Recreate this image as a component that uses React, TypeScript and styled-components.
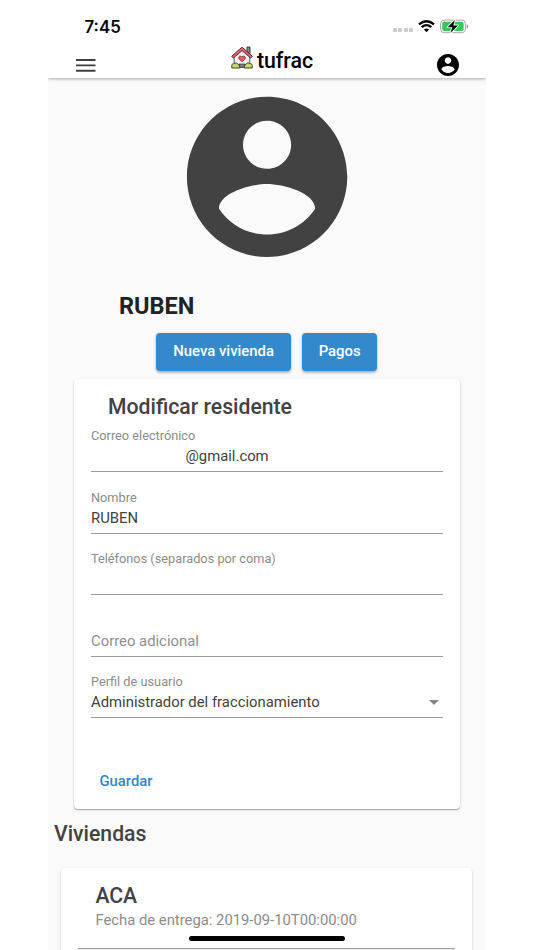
import React from "react";
import styled, { createGlobalStyle } from "styled-components";

const GlobalStyle = createGlobalStyle`
  * { box-sizing: border-box; }
  html, body { margin: 0; padding: 0; background: #fff; overflow: hidden; }
  body { font-family: Roboto, "Liberation Sans", sans-serif; }
`;

const Phone = styled.div`
  position: relative;
  width: 438px;
  height: 950px;
  margin-left: 48px;
  overflow: hidden;
  background: #fafafa;
  display: flex;
  flex-direction: column;
`;

const Header = styled.header`
  flex: none;
  height: 78px;
  background: #fff;
  box-shadow: 0 1px 3px rgba(0, 0, 0, 0.32);
  clip-path: inset(0 0 -6px 0);
`;

const StatusBar = styled.div`
  display: flex;
  align-items: center;
  justify-content: space-between;
  height: 44px;
  padding: 9px 17px 0 36.5px;
`;

const Clock = styled.span`
  font: 600 16.8px/20px Inter, sans-serif;
  color: #000;
`;

const StatusIcons = styled.div`
  display: flex;
  align-items: center;
  gap: 5px;
`;

const Signal = styled.div`
  display: flex;
  gap: 1.4px;
  margin-top: 7px;
`;

const Dot = styled.i`
  width: 4px;
  height: 4px;
  border-radius: 1.2px;
  background: #cbcbcb;
`;

const Toolbar = styled.div`
  display: grid;
  grid-template-columns: 1fr auto 1fr;
  height: 34px;
  padding: 0 27px 0 28px;

  & > svg { display: block; }
`;

const MenuIcon = styled.svg`
  width: 20px;
  height: 13px;
  margin-top: 15px;
`;

const UserIcon = styled.svg`
  width: 22px;
  height: 22px;
  margin-top: 10px;
  justify-self: end;
`;

const Brand = styled.div`
  display: flex;
  align-items: flex-start;
  gap: 4px;
  padding: 2px 0 0 9px;
`;

const BrandName = styled.span`
  font-size: 21.3px;
  font-weight: 500;
  line-height: 24px;
  margin-top: 3px;
  color: #000;
`;

const Avatar = styled.svg`
  display: block;
  flex: none;
  width: 162px;
  height: 162px;
  margin: 18px 0 0 138px;
`;

const UserName = styled.h1`
  margin: 33px 0 0 71px;
  font-size: 23.5px;
  line-height: 30px;
  font-weight: 700;
  color: #222;
`;

const Actions = styled.div`
  display: flex;
  gap: 11px;
  margin: 12px 0 0 108.4px;
  flex: none;
`;

const RaisedButton = styled.button<{ $width: number }>`
  width: ${(p) => p.$width}px;
  height: 38px;
  padding: 0 0 2px;
  border: 0;
  border-radius: 4px;
  background: #3389cb;
  color: #fff;
  font: 500 14.9px/34px Roboto, sans-serif;
  box-shadow: 0 2px 2px rgba(0, 0, 0, 0.2), 0 1px 4px rgba(0, 0, 0, 0.14);
`;

const Card = styled.section<{ $left: number; $width: number; $height: number; $top: number }>`
  flex: none;
  width: ${(p) => p.$width}px;
  height: ${(p) => p.$height}px;
  margin: ${(p) => p.$top}px 0 0 ${(p) => p.$left}px;
  padding: 14.5px 17px 0;
  background: #fff;
  border-radius: 4px;
  box-shadow: 0 1px 1px rgba(0, 0, 0, 0.28), 0 1px 3px rgba(0, 0, 0, 0.12);
`;

const Heading = styled.h2<{ $indent?: number }>`
  margin: 0 0 0 ${(p) => p.$indent ?? 0}px;
  font-size: 21.2px;
  line-height: 28px;
  font-weight: 500;
  color: #424242;
`;

const Field = styled.div<{ $first?: boolean }>`
  display: flex;
  flex-direction: column;
  justify-content: flex-end;
  height: ${(p) => (p.$first ? 51.3 : 61.5)}px;
  border-bottom: 1px solid #9b9b9b;
`;

const Label = styled.label`
  font-size: 12.75px;
  line-height: 16px;
  color: #8c8c8c;
  margin-bottom: 2px;
`;

const Value = styled.div<{ $indent?: number }>`
  display: flex;
  justify-content: space-between;
  align-items: center;
  height: 20px;
  margin-bottom: 5px;
  padding: 0 4.5px 0 ${(p) => p.$indent ?? 0}px;
  font-size: 14.85px;
  line-height: 20px;
  color: #424242;
`;

const Placeholder = styled(Value)`
  color: #8f8f8f;
`;

const Caret = styled.i`
  border: 5.5px solid transparent;
  border-top-color: #858585;
  border-bottom: 0;
`;

const TextButton = styled.button`
  margin: 53px 0 0 8.5px;
  padding: 0;
  border: 0;
  background: none;
  color: #2f86ca;
  font: 500 14.8px/20px Roboto, sans-serif;
`;

const SectionTitle = styled(Heading)`
  margin-top: 11px;
  margin-left: 6px;
`;

const Subtitle = styled.p`
  margin: 0 0 0 17px;
  font-size: 14.82px;
  line-height: 20px;
  color: #8c8c8c;
`;

const Panel = styled.div`
  height: 20px;
  margin-top: 18px;
  border-top: 1px solid #9b9b9b;
  background: #eee;
`;

const HomeIndicator = styled.div`
  position: absolute;
  left: 141px;
  bottom: 9px;
  width: 156px;
  height: 5px;
  border-radius: 3px;
  background: #000;
`;

const accountPath =
  "M12 2C6.48 2 2 6.48 2 12s4.48 10 10 10 10-4.48 10-10S17.52 2 12 2zm0 3c1.66 0 3 1.34 3 3s-1.34 3-3 3-3-1.34-3-3 1.34-3 3-3zm0 14.2c-2.5 0-4.71-1.28-6-3.22.03-1.99 4-3.08 6-3.08 1.99 0 5.97 1.09 6 3.08-1.29 1.94-3.5 3.22-6 3.22z";

const Wifi = () => (
  <svg width="17" height="13" viewBox="0 0 17 13" fill="none" stroke="#000">
    <path d="M1 4.3Q8.5-1.9 16 4.3" strokeWidth="2.3" />
    <path d="M3.7 7.2Q8.5 3.1 13.3 7.2" strokeWidth="2.3" />
    <path d="M5.9 9.6Q8.5 7.3 11.1 9.6L8.5 12.3Z" fill="#000" stroke="none" />
  </svg>
);

const Battery = () => (
  <svg width="29" height="15" viewBox="0 0 29 15">
    <rect x="0.6" y="1.1" width="24.8" height="12.6" rx="3.6" fill="#fff" stroke="#a5a5a5" strokeWidth="1" />
    <rect x="2.2" y="2.7" width="21.4" height="9.4" rx="2" fill="#35c759" />
    <path d="M26.7 5.4v4q1.5-.6 1.5-2t-1.5-2z" fill="#909090" />
    <path
      d="M14.8 1 7.7 8.2h4.6L10.4 14l7.6-7.5h-4.7z"
      fill="#000"
      stroke="#fff"
      strokeWidth="1.8"
      paintOrder="stroke"
      strokeLinejoin="round"
    />
  </svg>
);

const HouseLogo = () => (
  <svg width="22" height="23" viewBox="0 0 22 23" strokeLinejoin="round">
    <path d="M16 1h3v7l-3-2.5z" fill="#80858e" stroke="#33333b" strokeWidth=".9" />
    <path d="M3.2 10 11 3.5l7.8 6.5v11H3.2z" fill="#f2f0f5" stroke="#44444c" strokeWidth=".9" />
    <path d="M.7 10.2 11 1.2l10.3 9-1.6 1.9L11 4.6l-8.7 7.5z" fill="#ee6264" stroke="#542c35" strokeWidth="1" />
    <path d="M8 18h6v3.5H8z" fill="#777983" stroke="#383840" strokeWidth=".7" />
    <path d="M11 15.8 7.9 12.7c-1.2-2.1 1.7-3.6 3.1-1.6 1.4-2 4.3-.5 3.1 1.6z" fill="#f35b64" stroke="#53252d" strokeWidth=".8" />
    <path d="M.8 22v-2.8c.2-1.5 1.8-1.9 2.4-1.3 1.2-1.7 3.9-.9 4 .9 1.3 0 1.6 1.6 1.5 3.2z" fill="#c9dc63" stroke="#3b402a" strokeWidth="1" />
    <path d="M21.2 22v-2.8c-.2-1.5-1.8-1.9-2.4-1.3-1.2-1.7-3.9-.9-4 .9-1.3 0-1.6 1.6-1.5 3.2z" fill="#c9dc63" stroke="#3b402a" strokeWidth="1" />
  </svg>
);

export default function App() {
  return (
    <>
      <GlobalStyle />
      <Phone>
        <Header>
          <StatusBar>
            <Clock>7:45</Clock>
            <StatusIcons>
              <Signal><Dot /><Dot /><Dot /><Dot /></Signal>
              <Wifi />
              <Battery />
            </StatusIcons>
          </StatusBar>
          <Toolbar>
            <MenuIcon viewBox="0 0 20 13" fill="#414141">
              <path d="M0 0h19.5v1.9H0zM0 5.4h19.5v1.9H0zM0 10.8h19.5v1.9H0z" />
            </MenuIcon>
            <Brand>
              <HouseLogo />
              <BrandName>tufrac</BrandName>
            </Brand>
            <UserIcon viewBox="2 2 20 20"><path d={accountPath} /></UserIcon>
          </Toolbar>
        </Header>
        <Avatar viewBox="1.89 1.92 20.2 20.2" fill="#424242"><path d={accountPath} /></Avatar>
        <UserName>RUBEN</UserName>
        <Actions>
          <RaisedButton $width={134.5}>Nueva vivienda</RaisedButton>
          <RaisedButton $width={75.5}>Pagos</RaisedButton>
        </Actions>
        <Card as="form" $left={26} $width={386} $height={430.5} $top={7.5}>
          <Heading $indent={17}>Modificar residente</Heading>
          <Field $first>
            <Label>Correo electrónico</Label>
            <Value $indent={94.5}>@gmail.com</Value>
          </Field>
          <Field>
            <Label>Nombre</Label>
            <Value>RUBEN</Value>
          </Field>
          <Field>
            <Label>Teléfonos (separados por coma)</Label>
            <Value />
          </Field>
          <Field>
            <Placeholder>Correo adicional</Placeholder>
          </Field>
          <Field>
            <Label>Perfil de usuario</Label>
            <Value>Administrador del fraccionamiento<Caret /></Value>
          </Field>
          <TextButton type="button">Guardar</TextButton>
        </Card>
        <SectionTitle>Viviendas</SectionTitle>
        <Card $left={13.4} $width={411} $height={120} $top={19.5}>
          <Heading $indent={17}>ACA</Heading>
          <Subtitle>Fecha de entrega: 2019-09-10T00:00:00</Subtitle>
          <Panel />
        </Card>
        <HomeIndicator />
      </Phone>
    </>
  );
}
